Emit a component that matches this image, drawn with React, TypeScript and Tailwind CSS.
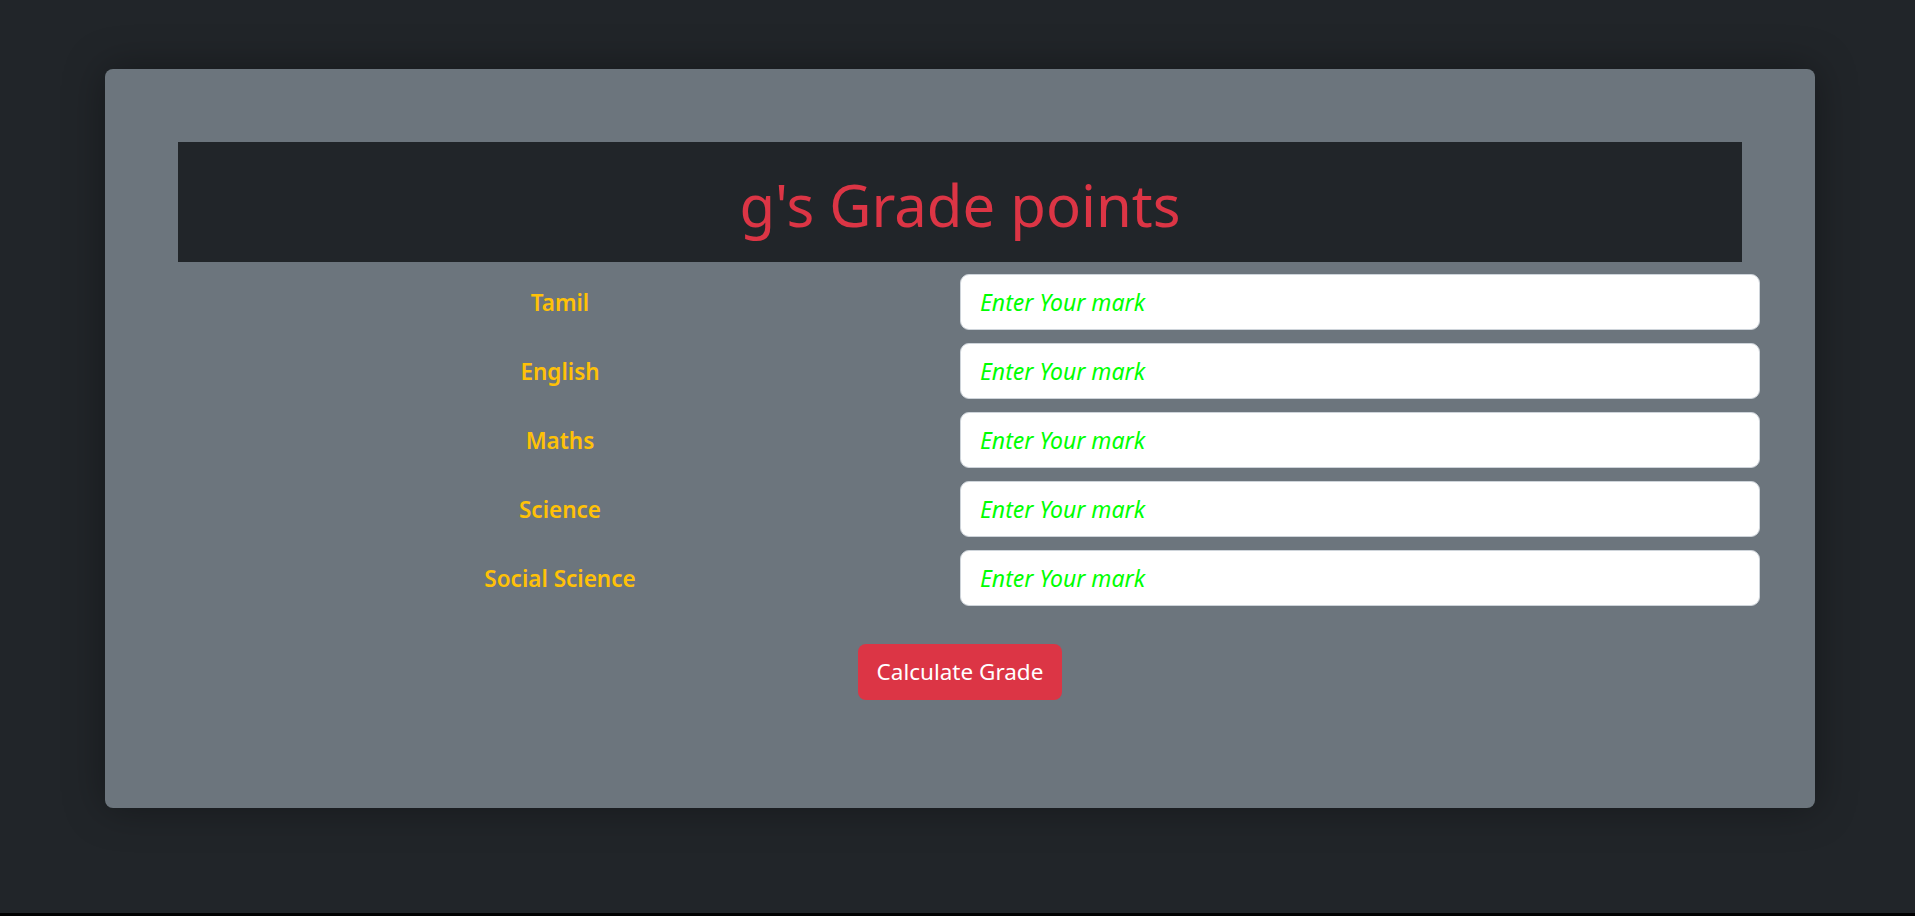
import React from "react";

const subjects = ["Tamil", "English", "Maths", "Science", "Social Science"];

export default function App() {
  return (
    <div className="h-[916px] w-full bg-black" style={{ fontFamily: '"Noto Sans", "Open Sans", sans-serif' }}>
      <div className="h-[913px] w-full bg-[#212529] pt-[69px] pl-[105px]">
        <div className="w-[1710px] h-[739px] bg-[#6c757d] rounded-[8px] px-[73px] pt-[73px] shadow-[0_0_40px_rgba(0,0,0,0.35)]">
          <div className="h-[120px] bg-[#212529] flex items-center justify-center">
            <h1 className="text-[#dc3545] text-[58px] leading-none pt-[5px] font-normal">g's Grade points</h1>
          </div>
          <div className="-mx-[18px] mt-[12px] flex flex-col gap-[13px]">
            {subjects.map((s) => (
              <div key={s} className="flex items-center h-[56px]">
                <div className="w-[800px] pt-[2px] text-center text-[#ffc107] text-[22.5px] font-semibold">{s}</div>
                <input
                  type="text"
                  placeholder="Enter Your mark"
                  className="flex-1 h-[56px] bg-white border border-[#ced4da] rounded-[9px] px-[19px] text-[23px] italic placeholder:text-[#00ff00] placeholder:italic outline-none"
                />
              </div>
            ))}
          </div>
          <div className="flex justify-center mt-[38px]">
            <button className="w-[204px] h-[56px] bg-[#dc3545] text-white text-[22.5px] rounded-[8px]">Calculate Grade</button>
          </div>
        </div>
      </div>
    </div>
  );
}
